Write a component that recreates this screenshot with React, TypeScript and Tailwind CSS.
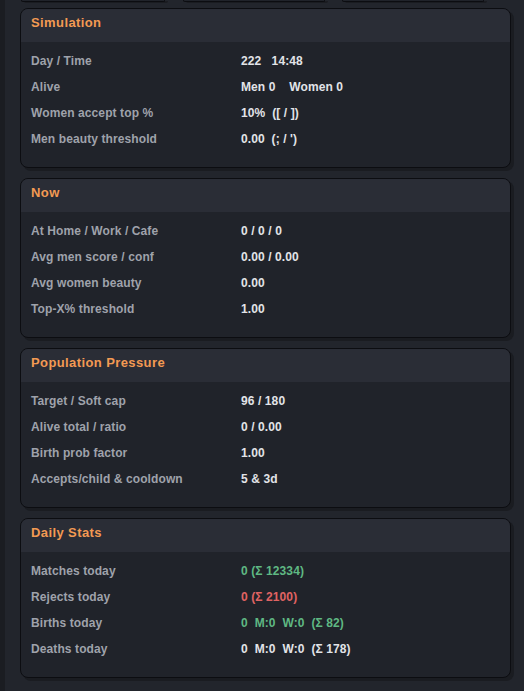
import React from "react";

type Row = { label: string; value: React.ReactNode };

const font = { fontFamily: '"Liberation Sans", Arial, sans-serif' };

const Panel = ({ title, rows }: { title: string; rows: Row[] }) => {
  return (
    <div className="rounded-[8px] border border-[#0c0d11] bg-[#20232a] overflow-hidden shadow-[3px_3px_0_#1a1c21]">
      <div className="h-[33px] bg-[#2a2d36] pl-[10px] pt-[4px]">
        <h2 className="text-[13px] font-bold tracking-[0.4px] text-[#f39a53]">{title}</h2>
      </div>
      <div className="pt-[6px] pb-[15px]">
        {rows.map((r) => (
          <div key={r.label} className="h-[26px] pl-[10px] grid grid-cols-[210px_1fr] items-center">
            <span className="text-[12px] font-bold tracking-[0.1px] text-[#9fa2ab]">{r.label}</span>
            <span className="text-[12px] font-bold tracking-[0.1px] text-[#e2e4e8] whitespace-pre">{r.value}</span>
          </div>
        ))}
      </div>
    </div>
  );
};

const App = () => {
  const green = "text-[#5fb883]";
  return (
    <div className="min-h-[691px] w-[524px] bg-[#1b1d22] pl-[5px]" style={font}>
      <div className="min-h-[691px] bg-[#22252c] pl-[15px] pr-[13px]">
        <div className="h-[3px] flex pl-[1px]">
          <div className="w-[144px] h-[2px] border-x border-b border-[#0c0d11] rounded-b-[6px] bg-[#20232a] shadow-[3px_1px_0_#1a1c21]" />
          <div className="w-[142px] h-[2px] ml-[18px] border-x border-b border-[#0c0d11] rounded-b-[6px] bg-[#20232a] shadow-[3px_1px_0_#1a1c21]" />
          <div className="w-[142px] h-[2px] ml-[17px] border-x border-b border-[#0c0d11] rounded-b-[6px] bg-[#20232a] shadow-[3px_1px_0_#1a1c21]" />
        </div>
        <div className="mt-[5px] flex flex-col gap-[10px]">
          <Panel
            title="Simulation"
            rows={[
              { label: "Day / Time", value: "222   14:48" },
              { label: "Alive", value: "Men 0    Women 0" },
              { label: "Women accept top %", value: "10%  ([ / ])" },
              { label: "Men beauty threshold", value: "0.00  (; / ')" },
            ]}
          />
          <Panel
            title="Now"
            rows={[
              { label: "At Home / Work / Cafe", value: "0 / 0 / 0" },
              { label: "Avg men score / conf", value: "0.00 / 0.00" },
              { label: "Avg women beauty", value: "0.00" },
              { label: "Top-X% threshold", value: "1.00" },
            ]}
          />
          <Panel
            title="Population Pressure"
            rows={[
              { label: "Target / Soft cap", value: "96 / 180" },
              { label: "Alive total / ratio", value: "0 / 0.00" },
              { label: "Birth prob factor", value: "1.00" },
              { label: "Accepts/child & cooldown", value: "5 & 3d" },
            ]}
          />
          <Panel
            title="Daily Stats"
            rows={[
              { label: "Matches today", value: <span className={green}>0 (Σ 12334)</span> },
              { label: "Rejects today", value: <span className="text-[#e06363]">0 (Σ 2100)</span> },
              { label: "Births today", value: <span className={green}>0  M:0  W:0  (Σ 82)</span> },
              { label: "Deaths today", value: "0  M:0  W:0  (Σ 178)" },
            ]}
          />
        </div>
      </div>
    </div>
  );
};

export default App;
